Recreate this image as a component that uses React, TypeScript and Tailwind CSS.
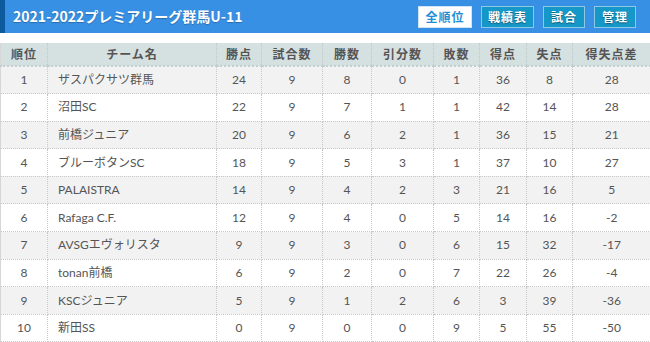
import React from "react";

type Row = {
  rank: number;
  team: string;
  pts: number;
  games: number;
  win: number;
  draw: number;
  lose: number;
  gf: number;
  ga: number;
  diff: number;
};

const rows: Row[] = [
  { rank: 1, team: "ザスパクサツ群馬", pts: 24, games: 9, win: 8, draw: 0, lose: 1, gf: 36, ga: 8, diff: 28 },
  { rank: 2, team: "沼田SC", pts: 22, games: 9, win: 7, draw: 1, lose: 1, gf: 42, ga: 14, diff: 28 },
  { rank: 3, team: "前橋ジュニア", pts: 20, games: 9, win: 6, draw: 2, lose: 1, gf: 36, ga: 15, diff: 21 },
  { rank: 4, team: "ブルーボタンSC", pts: 18, games: 9, win: 5, draw: 3, lose: 1, gf: 37, ga: 10, diff: 27 },
  { rank: 5, team: "PALAISTRA", pts: 14, games: 9, win: 4, draw: 2, lose: 3, gf: 21, ga: 16, diff: 5 },
  { rank: 6, team: "Rafaga C.F.", pts: 12, games: 9, win: 4, draw: 0, lose: 5, gf: 14, ga: 16, diff: -2 },
  { rank: 7, team: "AVSGエヴォリスタ", pts: 9, games: 9, win: 3, draw: 0, lose: 6, gf: 15, ga: 32, diff: -17 },
  { rank: 8, team: "tonan前橋", pts: 6, games: 9, win: 2, draw: 0, lose: 7, gf: 22, ga: 26, diff: -4 },
  { rank: 9, team: "KSCジュニア", pts: 5, games: 9, win: 1, draw: 2, lose: 6, gf: 3, ga: 39, diff: -36 },
  { rank: 10, team: "新田SS", pts: 0, games: 9, win: 0, draw: 0, lose: 9, gf: 5, ga: 55, diff: -50 },
];

const cols = [
  { label: "順位", w: "w-[47px]" },
  { label: "チーム名", w: "w-[169px]" },
  { label: "勝点", w: "w-[45px]" },
  { label: "試合数", w: "w-[61px]" },
  { label: "勝数", w: "w-[49px]" },
  { label: "引分数", w: "w-[62px]" },
  { label: "敗数", w: "w-[46px]" },
  { label: "得点", w: "w-[47px]" },
  { label: "失点", w: "w-[46px]" },
  { label: "得失点差", w: "w-[78px]" },
];

const font = "font-['Lato','Noto_Sans_CJK_JP',sans-serif]";

export default function App() {
  return (
    <div className={`w-[650px] h-[342px] overflow-hidden bg-white ${font}`}>
      {/* title bar */}
      <div className="flex h-[33px] items-center border-l-[5px] border-[#0d5a9c] bg-[#3890e4] pl-[8px] pr-[14px]">
        <h1 className="flex-1 font-['Noto_Sans_CJK_JP',sans-serif] text-[14px] font-bold text-white [text-shadow:0_1px_1px_rgba(0,0,0,0.25)]">
          2021-2022プレミアリーグ群馬U-11
        </h1>
        <div className="flex gap-[9px] font-['Noto_Sans_CJK_JP',sans-serif] text-[12px] font-bold tracking-[1px]">
          <span className="flex h-[22px] w-[54px] items-center justify-center border border-[#cfe4f5] bg-white text-[#1f8fd3]">
            全順位
          </span>
          <span className="flex h-[22px] w-[53px] items-center justify-center border border-[#8dc9e6] bg-[#1597c7] text-white [text-shadow:0_1px_1px_rgba(0,0,0,0.4)]">
            戦績表
          </span>
          <span className="flex h-[22px] w-[42px] items-center justify-center border border-[#8dc9e6] bg-[#1597c7] text-white [text-shadow:0_1px_1px_rgba(0,0,0,0.4)]">
            試合
          </span>
          <span className="flex h-[22px] w-[42px] items-center justify-center border border-[#8dc9e6] bg-[#1597c7] text-white [text-shadow:0_1px_1px_rgba(0,0,0,0.4)]">
            管理
          </span>
        </div>
      </div>

      {/* standings table */}
      <table className="mt-[10px] w-[650px] table-fixed border-collapse border-l border-[#d6d6d6] text-[12px]">
        <thead>
          <tr className="h-[23px] bg-[#d5e0e0]">
            {cols.map((c) => (
              <th
                key={c.label}
                className={`${c.w} border-x border-b-2 border-dotted border-x-[#bcc8c8] border-b-[#c4d0d0] p-0 text-center font-['Noto_Sans_CJK_JP',sans-serif] font-bold tracking-[1px] text-[#555] first:border-l-0`}
              >
                {c.label}
              </th>
            ))}
          </tr>
        </thead>
        <tbody className="text-[#555]">
          {rows.map((r) => (
            <tr key={r.rank} className="h-[27.6px] odd:bg-[#f2f2f2] even:bg-white">
              <td className="border-r border-b border-dotted border-[#c8c8c8] p-0 text-center">{r.rank}</td>
              <td className="border-x border-b border-dotted border-[#c8c8c8] py-0 pl-[10px] text-left">{r.team}</td>
              <td className="border-x border-b border-dotted border-[#c8c8c8] p-0 text-center">{r.pts}</td>
              <td className="border-x border-b border-dotted border-[#c8c8c8] p-0 text-center">{r.games}</td>
              <td className="border-x border-b border-dotted border-[#c8c8c8] p-0 text-center">{r.win}</td>
              <td className="border-x border-b border-dotted border-[#c8c8c8] p-0 text-center">{r.draw}</td>
              <td className="border-x border-b border-dotted border-[#c8c8c8] p-0 text-center">{r.lose}</td>
              <td className="border-x border-b border-dotted border-[#c8c8c8] p-0 text-center">{r.gf}</td>
              <td className="border-x border-b border-dotted border-[#c8c8c8] p-0 text-center">{r.ga}</td>
              <td className="border-l border-b border-dotted border-[#c8c8c8] p-0 text-center">{r.diff}</td>
            </tr>
          ))}
        </tbody>
      </table>
    </div>
  );
}
